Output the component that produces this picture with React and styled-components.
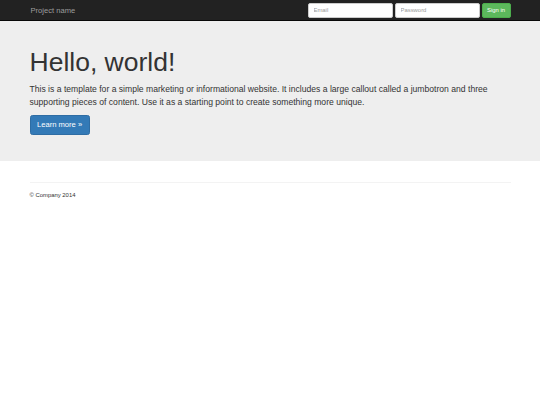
import React from "react";
import styled, { createGlobalStyle } from "styled-components";

const GlobalStyle = createGlobalStyle`
  html, body {
    margin: 0;
    padding: 0;
    background: #fff;
    font-family: "Liberation Sans", Arial, sans-serif;
    color: #333;
  }
  * {
    box-sizing: border-box;
  }
`;

const Navbar = styled.nav`
  height: 21px;
  background: #222;
  border-bottom: 1px solid #080808;
`;

const Container = styled.div`
  width: 481px;
  margin: 0 auto;
`;

const NavInner = styled(Container)`
  height: 100%;
  display: flex;
  align-items: center;
  justify-content: space-between;
`;

const Brand = styled.span`
  font-size: 7.6px;
  color: #9d9d9d;
  padding-left: 1px;
  cursor: pointer;
`;

const SignInForm = styled.form`
  display: flex;
  align-items: center;
  gap: 2px;
  margin: 0;
`;

const Field = styled.input`
  width: 85px;
  height: 15px;
  padding: 0 5px;
  font-family: inherit;
  font-size: 5.9px;
  color: #555;
  background: #fff;
  border: 1px solid #ccc;
  border-radius: 2px;
  outline: none;
  &::placeholder {
    color: #999;
  }
`;

const SignInButton = styled.button`
  width: 29px;
  height: 15px;
  padding: 0;
  font-family: inherit;
  font-size: 5.9px;
  color: #fff;
  background: #5cb85c;
  border: 1px solid #4cae4c;
  border-radius: 2px;
`;

const Jumbotron = styled.div`
  background: #eee;
  padding: 27px 0 26px;
`;

const Heading = styled.h1`
  margin: 0 0 6px;
  font-size: 26.5px;
  font-weight: 500;
  line-height: 1.1;
  color: #333;
`;

const Lead = styled.p`
  margin: 0 0 5px;
  font-size: 8.6px;
  line-height: 12.6px;
  color: #333;
`;

const PrimaryButton = styled.a`
  display: inline-flex;
  align-items: center;
  height: 20px;
  padding: 0 6.5px;
  font-size: 7.6px;
  color: #fff;
  background: #337ab7;
  border: 1px solid #2e6da4;
  border-radius: 2.5px;
  text-decoration: none;
`;

const Footer = styled.footer`
  margin-top: 21px;
  border-top: 1px solid #f3f3f3;
  padding-top: 9px;
  font-size: 5.9px;
  color: #333;
`;

export default function App() {
  return (
    <>
      <GlobalStyle />
      <Navbar>
        <NavInner>
          <Brand>Project name</Brand>
          <SignInForm onSubmit={(e) => e.preventDefault()}>
            <Field type="text" placeholder="Email" />
            <Field type="password" placeholder="Password" />
            <SignInButton type="submit">Sign in</SignInButton>
          </SignInForm>
        </NavInner>
      </Navbar>
      <Jumbotron>
        <Container>
          <Heading>Hello, world!</Heading>
          <Lead>
            This is a template for a simple marketing or informational website.
            It includes a large callout called a jumbotron and three supporting
            pieces of content. Use it as a starting point to create something
            more unique.
          </Lead>
          <PrimaryButton href="#">Learn more »</PrimaryButton>
        </Container>
      </Jumbotron>
      <Container>
        <Footer>© Company 2014</Footer>
      </Container>
    </>
  );
}
